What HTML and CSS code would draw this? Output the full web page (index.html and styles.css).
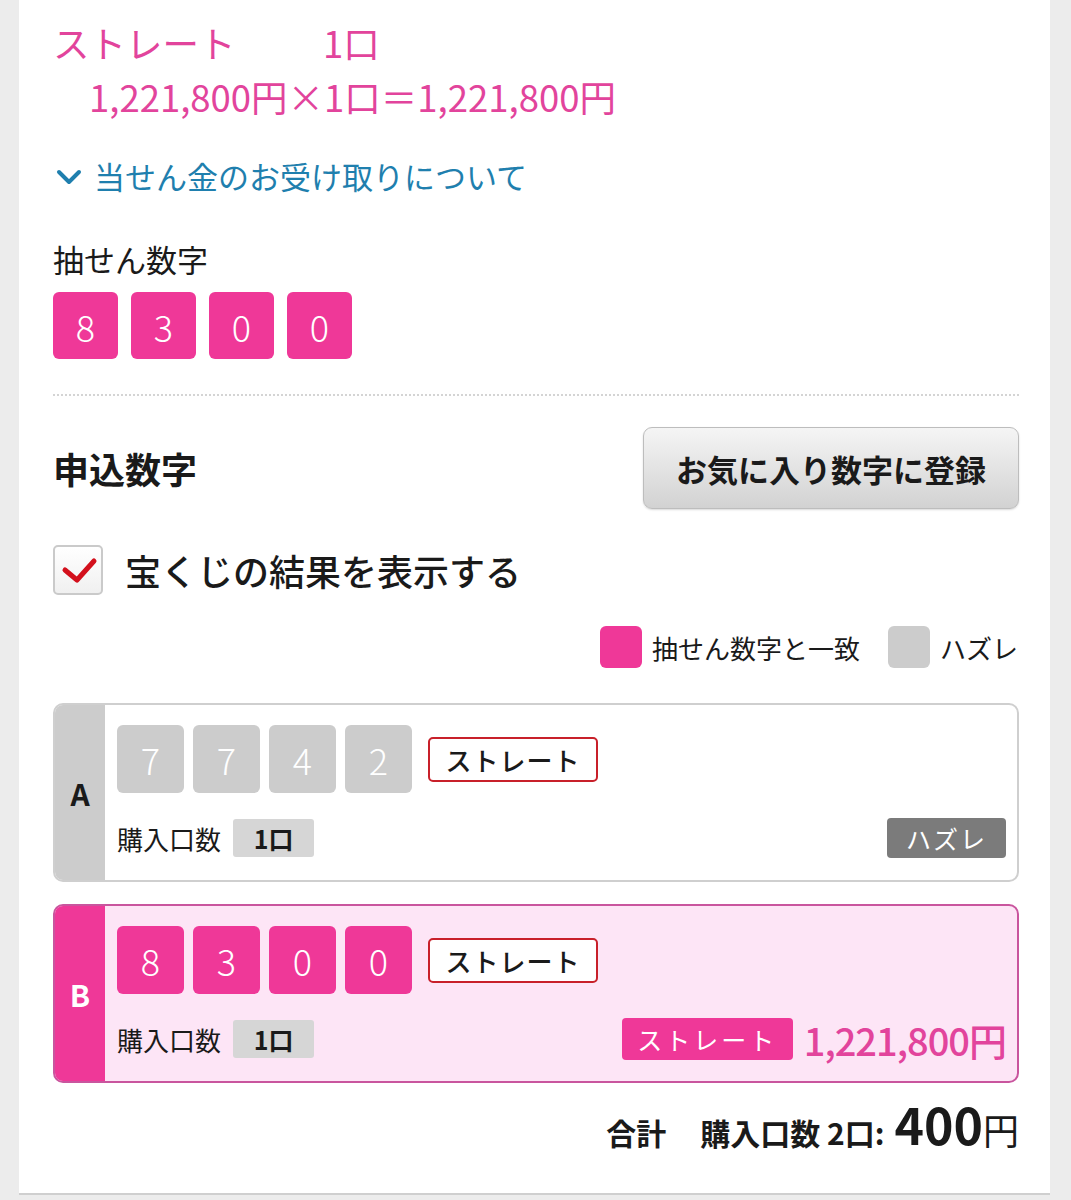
FILE: index.html
```html
<!DOCTYPE html>
<html lang="ja">
<head>
    <meta charset="UTF-8">
    <meta name="viewport" content="width=device-width, initial-scale=1.0">
    <title>当せん番号照会</title>
    <link rel="stylesheet" href="styles.css">
</head>
<body>
    <div class="panel">
        <div class="prize">
            <div class="prize-line"><span class="prize-type">ストレート</span><span>1口</span></div>
            <div class="prize-calc">1,221,800円×1口＝1,221,800円</div>
        </div>

        <a href="#" class="toggle">
            <svg class="chevron" width="26" height="18" viewBox="0 0 26 18"><path d="M3 4 L13 14 L23 4" fill="none" stroke="#1f7fae" stroke-width="4" stroke-linecap="round" stroke-linejoin="round"/></svg>
            当せん金のお受け取りについて
        </a>

        <div class="draw-label">抽せん数字</div>
        <div class="draw-digits">
            <span class="digit">8</span>
            <span class="digit">3</span>
            <span class="digit">0</span>
            <span class="digit">0</span>
        </div>

        <div class="dots"></div>

        <div class="entry-head">
            <h3>申込数字</h3>
            <button class="fav-btn">お気に入り数字に登録</button>
        </div>

        <label class="show-result">
            <span class="check">
                <svg width="46" height="46" viewBox="0 0 46 46"><path d="M10 23 L22 33 L39 14" fill="none" stroke="#d3101c" stroke-width="5" stroke-linecap="round" stroke-linejoin="round"/></svg>
            </span>
            宝くじの結果を表示する
        </label>

        <div class="legend">
            <span class="swatch hit"></span><span class="legend-text">抽せん数字と一致</span>
            <span class="swatch miss"></span><span class="legend-text">ハズレ</span>
        </div>

        <!-- 申込 A -->
        <div class="ticket lose">
            <div class="ticket-key">A</div>
            <div class="ticket-body">
                <div class="ticket-row">
                    <span class="tdigit">7</span>
                    <span class="tdigit">7</span>
                    <span class="tdigit">4</span>
                    <span class="tdigit">2</span>
                    <span class="type-tag">ストレート</span>
                </div>
                <div class="ticket-row split">
                    <div class="count">購入口数 <span class="count-chip">1口</span></div>
                    <span class="result-miss">ハズレ</span>
                </div>
            </div>
        </div>

        <!-- 申込 B -->
        <div class="ticket win">
            <div class="ticket-key">B</div>
            <div class="ticket-body">
                <div class="ticket-row">
                    <span class="tdigit">8</span>
                    <span class="tdigit">3</span>
                    <span class="tdigit">0</span>
                    <span class="tdigit">0</span>
                    <span class="type-tag">ストレート</span>
                </div>
                <div class="ticket-row split">
                    <div class="count">購入口数 <span class="count-chip">1口</span></div>
                    <div class="result-win"><span class="win-tag">ストレート</span><span class="win-amount">1,221,800円</span></div>
                </div>
            </div>
        </div>

        <div class="total">
            <span class="total-label">合計</span>
            <span class="total-count">購入口数 2口:</span>
            <span class="total-price">400</span><span class="total-yen">円</span>
        </div>
    </div>
</body>
</html>
```

FILE: styles.css
```css
body {
    margin: 0;
    background-color: #ececec;
    font-family: "Noto Sans CJK JP", "Noto Sans", sans-serif;
    color: #1a1a1a;
}
.panel {
    width: 1031px;
    box-sizing: border-box;
    margin-left: 19px;
    padding: 16px 31px 42px 34px;
    background-color: #fff;
    border-bottom: 2px solid #cfcfcf;
}
.prize {
    color: #e2449c;
    font-size: 36.5px;
    line-height: 54px;
}
.prize-type {
    display: inline-block;
    width: 270px;
}
.prize-calc {
    padding-left: 36px;
}
.toggle {
    display: flex;
    align-items: center;
    margin-top: 32px;
    color: #1f7fae;
    font-size: 31px;
    line-height: 40px;
    text-decoration: none;
}
.chevron {
    margin: 2px 12px 0 3px;
}
.draw-label {
    margin-top: 43px;
    font-size: 31px;
    line-height: 40px;
}
.draw-digits {
    display: flex;
    gap: 13px;
    margin-top: 13px;
}
.digit {
    width: 65px;
    height: 67px;
    display: flex;
    align-items: center;
    justify-content: center;
    background-color: #ef3898;
    color: #fff;
    border-radius: 6px;
    font-size: 36px;
    font-weight: 300;
}
.dots {
    margin-top: 35px;
    border-top: 2px dotted #d4d4d4;
}
.entry-head {
    display: flex;
    justify-content: space-between;
    align-items: center;
    margin-top: 31px;
}
.entry-head h3 {
    margin: 0;
    font-size: 36px;
    font-weight: 700;
}
.fav-btn {
    width: 376px;
    height: 82px;
    border: 1px solid #bdbdbd;
    border-radius: 9px;
    background: linear-gradient(#f5f5f5, #d2d2d2);
    box-shadow: 0 1px 2px rgba(0, 0, 0, 0.15);
    font-family: inherit;
    font-size: 31px;
    font-weight: 700;
    color: #1a1a1a;
}
.show-result {
    display: flex;
    align-items: center;
    gap: 22px;
    margin-top: 36px;
    font-size: 36px;
    font-weight: 500;
    line-height: 50px;
}
.check {
    width: 46px;
    height: 46px;
    border: 2px solid #cacaca;
    border-radius: 5px;
    background: linear-gradient(#fff, #f0f0f0);
    display: flex;
}
.legend {
    display: flex;
    justify-content: flex-end;
    align-items: center;
    margin-top: 31px;
    margin-right: 1px;
    font-size: 26px;
}
.swatch {
    width: 42px;
    height: 42px;
    border-radius: 6px;
    margin-right: 10px;
}
.swatch.hit {
    background-color: #ef3898;
}
.swatch.miss {
    background-color: #cccccc;
    margin-left: 28px;
}
.ticket {
    display: flex;
    margin-top: 35px;
    border: 2px solid #cfcfcf;
    border-radius: 10px;
    overflow: hidden;
}
.ticket.win {
    margin-top: 22px;
    border-color: #c9559e;
    background-color: #fde5f6;
}
.ticket-key {
    width: 50px;
    display: flex;
    align-items: center;
    justify-content: center;
    background-color: #cccccc;
    font-size: 30px;
    font-weight: 700;
}
.win .ticket-key {
    background-color: #ef3898;
    color: #fff;
}
.ticket-body {
    flex: 1;
    padding: 20px 11px 22px 12px;
}
.ticket-row {
    display: flex;
    align-items: center;
    gap: 9px;
}
.ticket-row.split {
    justify-content: space-between;
    height: 40px;
    margin-top: 25px;
}
.tdigit {
    width: 67px;
    height: 68px;
    display: flex;
    align-items: center;
    justify-content: center;
    background-color: #cccccc;
    color: #fff;
    border-radius: 6px;
    font-size: 36px;
    font-weight: 300;
}
.win .tdigit {
    background-color: #ef3898;
}
.type-tag {
    margin-left: 7px;
    width: 166px;
    height: 41px;
    display: flex;
    align-items: center;
    justify-content: center;
    border: 2px solid #c8202a;
    border-radius: 5px;
    background-color: #fff;
    font-size: 26px;
    font-weight: 500;
    letter-spacing: 1px;
}
.count {
    display: flex;
    align-items: center;
    gap: 12px;
    font-size: 26px;
}
.count-chip {
    width: 81px;
    height: 38px;
    display: flex;
    align-items: center;
    justify-content: center;
    background-color: #d6d6d6;
    border-radius: 3px;
    font-weight: 700;
    font-size: 25px;
}
.result-miss {
    width: 119px;
    height: 40px;
    display: flex;
    align-items: center;
    justify-content: center;
    background-color: #7b7b7b;
    color: #fff;
    border-radius: 4px;
    font-size: 25px;
    letter-spacing: 2px;
}
.result-win {
    display: flex;
    align-items: center;
    gap: 11px;
}
.win-tag {
    width: 171px;
    height: 42px;
    display: flex;
    align-items: center;
    justify-content: center;
    background-color: #ef3898;
    color: #fff;
    border-radius: 4px;
    font-size: 25px;
    letter-spacing: 3px;
}
.win-amount {
    color: #e2449c;
    font-size: 38px;
    font-weight: 500;
    letter-spacing: -1px;
}
.total {
    display: flex;
    justify-content: flex-end;
    align-items: baseline;
    height: 56px;
    margin-top: 12px;
    line-height: 56px;
    font-weight: 700;
}
.total-label {
    font-size: 30px;
    margin-right: 34px;
}
.total-count {
    font-size: 30px;
    margin-right: 10px;
}
.total-price {
    font-size: 50px;
}
.total-yen {
    font-size: 36px;
    font-weight: 400;
}
```
